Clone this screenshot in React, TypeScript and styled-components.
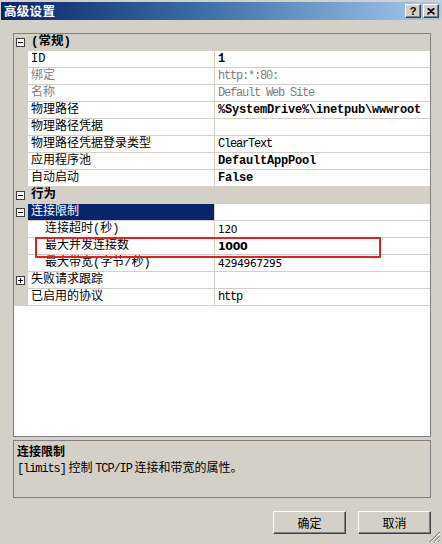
import React from 'react';
import styled, { createGlobalStyle } from 'styled-components';

type ValueFont = 'mono' | 'sans';

interface IRow {
	name: string;
	category?: boolean;
	toggle?: 'minus' | 'plus';
	selected?: boolean;
	indent?: boolean;
	disabled?: boolean;
	value?: string;
	bold?: boolean;
	font?: ValueFont;
}

const rows: IRow[] = [
	{ name: '(常规)', category: true, toggle: 'minus' },
	{ name: 'ID', value: '1', bold: true, font: 'mono' },
	{ name: '绑定', value: 'http:*:80:', disabled: true, font: 'mono' },
	{ name: '名称', value: 'Default Web Site', disabled: true, font: 'mono' },
	{ name: '物理路径', value: '%SystemDrive%\\inetpub\\wwwroot', bold: true, font: 'mono' },
	{ name: '物理路径凭据', value: '' },
	{ name: '物理路径凭据登录类型', value: 'ClearText', font: 'mono' },
	{ name: '应用程序池', value: 'DefaultAppPool', bold: true, font: 'mono' },
	{ name: '自动启动', value: 'False', bold: true, font: 'mono' },
	{ name: '行为', category: true, toggle: 'minus' },
	{ name: '连接限制', toggle: 'minus', selected: true, value: '' },
	{ name: '连接超时(秒)', indent: true, value: '120', font: 'sans' },
	{ name: '最大并发连接数', indent: true, value: '1000', bold: true, font: 'sans' },
	{ name: '最大带宽(字节/秒)', indent: true, value: '4294967295', font: 'sans' },
	{ name: '失败请求跟踪', toggle: 'plus', value: '' },
	{ name: '已启用的协议', value: 'http', font: 'mono' },
];

const GlobalStyle = createGlobalStyle`
	html, body {
		margin: 0;
		padding: 0;
		background: #d4d0c8;
	}
	body {
		font-family: 'Noto Sans CJK SC', 'Liberation Sans', sans-serif;
		font-size: 12px;
		color: #000;
	}
`;

const Window = styled.div`
	position: relative;
	width: 442px;
	height: 544px;
	box-sizing: border-box;
	padding-top: 2px;
	background: #d4d0c8;
	display: flex;
	flex-direction: column;
	overflow: hidden;
`;

const TitleBar = styled.div`
	height: 18px;
	margin: 0 1px;
	padding: 0 2px 0 3px;
	display: flex;
	align-items: center;
	justify-content: space-between;
	background: linear-gradient(to right, #0a246a 0%, #3a6ea5 45%, #a6caf0 100%);
`;

const Title = styled.span`
	color: #fff;
	font-weight: 700;
	font-size: 12.5px;
	line-height: 16px;
	letter-spacing: 0.3px;
`;

const TitleButtons = styled.div`
	display: flex;
	gap: 2px;
`;

const CaptionButton = styled.div`
	width: 16px;
	height: 14px;
	box-sizing: border-box;
	background: #d4d0c8;
	border-top: 1px solid #fff;
	border-left: 1px solid #fff;
	border-right: 1px solid #404040;
	border-bottom: 1px solid #404040;
	box-shadow: inset -1px -1px 0 #808080;
	display: flex;
	align-items: center;
	justify-content: center;
	font-family: 'Liberation Sans', sans-serif;
	font-weight: 700;
	font-size: 11px;
	line-height: 12px;
`;

const Body = styled.div`
	flex: 1;
	display: flex;
	flex-direction: column;
	padding: 13px 11px 0 13px;
`;

const Grid = styled.div`
	position: relative;
	height: 404px;
	box-sizing: border-box;
	border: 1px solid #808080;
	background: #fff;
`;

const Row = styled.div<{ $category?: boolean }>`
	display: grid;
	grid-template-columns: 14px 186px 1px 1fr;
	height: 17px;
	box-sizing: border-box;
	border-bottom: 1px solid #d4d0c8;
	background: ${(p) => (p.$category ? '#d4d0c8' : '#fff')};
`;

const Margin = styled.div`
	background: #d4d0c8;
	display: flex;
	align-items: flex-start;
	padding: 4px 0 0 2px;
`;

const ToggleBox = styled.div`
	position: relative;
	width: 9px;
	height: 9px;
	box-sizing: border-box;
	border: 1px solid #404040;
	background: #fff;

	&::before {
		content: '';
		position: absolute;
		left: 1px;
		top: 3px;
		width: 5px;
		height: 1px;
		background: #000;
	}
`;

const PlusBox = styled(ToggleBox)`
	&::after {
		content: '';
		position: absolute;
		left: 3px;
		top: 1px;
		width: 1px;
		height: 5px;
		background: #000;
	}
`;

const Name = styled.div<{ $indent?: boolean; $disabled?: boolean; $selected?: boolean; $category?: boolean }>`
	padding: 1px 0 0 ${(p) => (p.$indent ? '17px' : '3px')};
	line-height: 15px;
	white-space: nowrap;
	overflow: hidden;
	font-family: 'Liberation Mono', 'Noto Sans CJK SC', monospace;
	font-weight: ${(p) => (p.$category ? 700 : 400)};
	font-size: ${(p) => (p.$category ? '12.5px' : '12px')};
	color: ${(p) => (p.$selected ? '#fff' : p.$disabled ? '#808080' : '#000')};
	background: ${(p) => (p.$selected ? '#0a246a' : 'transparent')};
`;

const Divider = styled.div`
	background: #d4d0c8;
`;

const Value = styled.div<{ $bold?: boolean; $font?: ValueFont; $disabled?: boolean }>`
	padding: 1px 0 0 3px;
	line-height: 15px;
	white-space: nowrap;
	overflow: hidden;
	color: ${(p) => (p.$disabled ? '#808080' : '#000')};
	font-weight: ${(p) => (p.$bold ? 700 : 400)};
	font-family: ${(p) =>
		p.$font === 'sans' ? "'DejaVu Sans', sans-serif" : "'Liberation Mono', monospace"};
	font-size: ${(p) => (p.$font === 'sans' ? (p.$bold ? '11px' : '10.5px') : '12px')};
	letter-spacing: ${(p) => (p.$font === 'sans' ? '-0.3px' : p.$bold ? '-0.2px' : '-1.2px')};
`;

const Highlight = styled.div`
	position: absolute;
	left: 21px;
	top: 203px;
	width: 346px;
	height: 21px;
	box-sizing: border-box;
	border: 2px solid #ed1c24;
	pointer-events: none;
`;

const Description = styled.div`
	margin-top: 3px;
	height: 58px;
	box-sizing: border-box;
	border: 1px solid #808080;
	padding: 2px 3px 0;
`;

const DescTitle = styled.div`
	font-weight: 700;
	line-height: 16px;
`;

const DescText = styled.div`
	line-height: 16px;
`;

const Latin = styled.span`
	font-family: 'Liberation Mono', monospace;
	letter-spacing: -1.1px;
`;

const Buttons = styled.div`
	margin-top: 13px;
	display: flex;
	justify-content: flex-end;
	gap: 12px;
`;

const Button = styled.button`
	width: 73px;
	height: 23px;
	padding: 0;
	box-sizing: border-box;
	background: #d4d0c8;
	border-top: 1px solid #fff;
	border-left: 1px solid #fff;
	border-right: 1px solid #404040;
	border-bottom: 1px solid #404040;
	box-shadow: inset -1px -1px 0 #808080;
	font-family: 'Noto Sans CJK SC', sans-serif;
	font-size: 12px;
	color: #000;
`;

const Grip = styled.svg`
	position: absolute;
	right: 1px;
	bottom: 1px;
`;

const CloseGlyph = () => (
	<svg width="8" height="7" viewBox="0 0 8 7">
		<path d="M0.5 0.5 L7.5 6.5 M1.5 0.5 L7.5 5.7 M7.5 0.5 L0.5 6.5 M6.5 0.5 L0.5 5.7" stroke="#000" strokeWidth="1.2" />
	</svg>
);

export default function App() {
	return (
		<>
			<GlobalStyle />
			<Window>
				<TitleBar>
					<Title>高级设置</Title>
					<TitleButtons>
						<CaptionButton>?</CaptionButton>
						<CaptionButton>
							<CloseGlyph />
						</CaptionButton>
					</TitleButtons>
				</TitleBar>
				<Body>
					<Grid>
						{rows.map((row) => (
							<Row key={row.name} $category={row.category}>
								<Margin>
									{row.toggle === 'minus' && <ToggleBox />}
									{row.toggle === 'plus' && <PlusBox />}
								</Margin>
								<Name
									$indent={row.indent}
									$disabled={row.disabled}
									$selected={row.selected}
									$category={row.category}
								>
									{row.name}
								</Name>
								{row.category ? <div /> : <Divider />}
								{row.category ? (
									<div />
								) : (
									<Value $bold={row.bold} $font={row.font} $disabled={row.disabled}>
										{row.value}
									</Value>
								)}
							</Row>
						))}
						<Highlight />
					</Grid>
					<Description>
						<DescTitle>连接限制</DescTitle>
						<DescText>
							<Latin>[limits]</Latin> 控制 <Latin>TCP/IP</Latin> 连接和带宽的属性。
						</DescText>
					</Description>
					<Buttons>
						<Button>确定</Button>
						<Button>取消</Button>
					</Buttons>
				</Body>
				<Grip width="12" height="12" viewBox="0 0 12 12">
					<path d="M11 1 L1 11 M11 5 L5 11 M11 9 L9 11" stroke="#808080" strokeWidth="1.2" />
					<path d="M11 2 L2 11 M11 6 L6 11 M11 10 L10 11" stroke="#fff" strokeWidth="1" />
				</Grip>
			</Window>
		</>
	);
}
